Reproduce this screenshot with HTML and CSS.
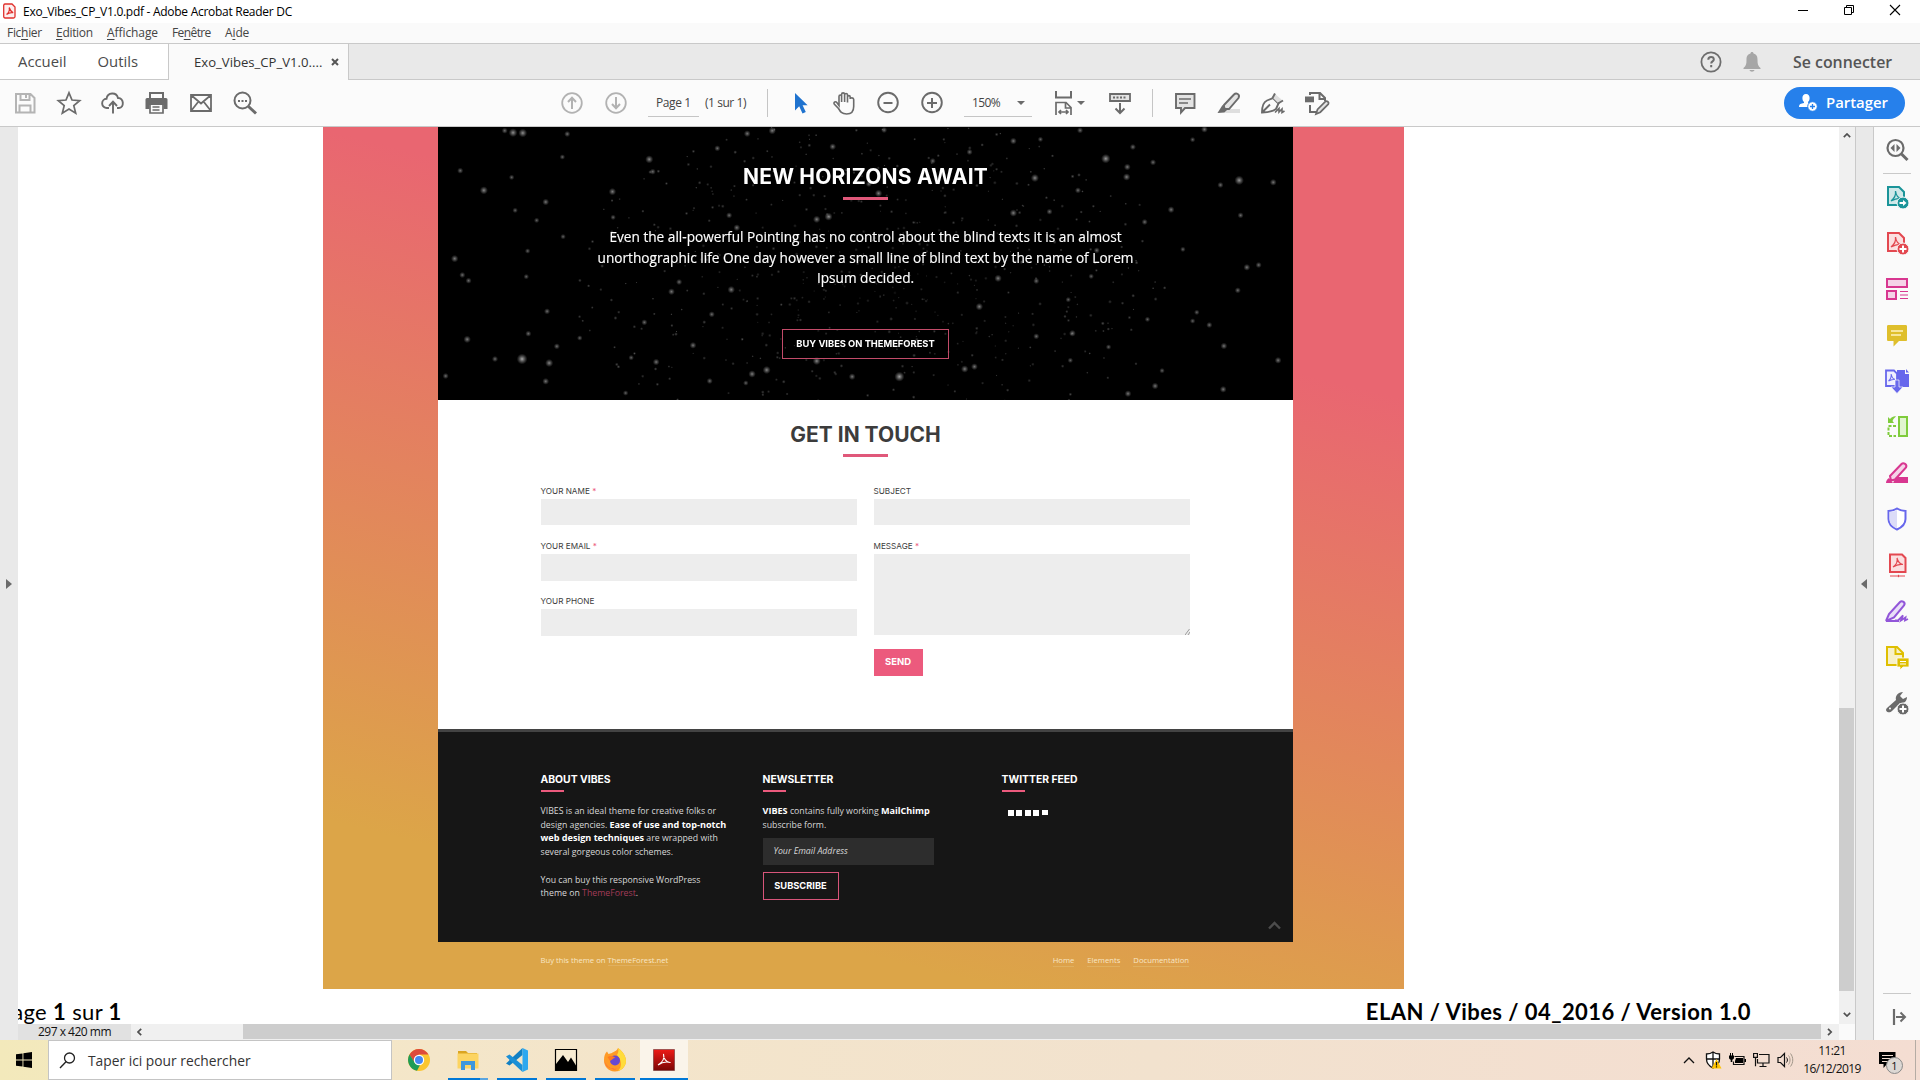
FILE: index.html
```html
<!DOCTYPE html>
<html lang="fr">
<head>
<meta charset="utf-8">
<title>Exo_Vibes_CP_V1.0.pdf - Adobe Acrobat Reader DC</title>
<link rel="stylesheet" href="styles.css">
</head>
<body>
<header class="titlebar">
  <svg class="app-icon" width="13" height="16" viewBox="0 0 13 16"><path d="M2 1h7l3 3v9.500a1.500 1.500 0 0 1-1.500 1.500H2A1.500 1.500 0 0 1 .7 13.500V2.300A1.500 1.500 0 0 1 2 1z" fill="#fdeeee" stroke="#e0302c" stroke-width="1.300"/><path d="M3.500 11.500C6 9.500 6.800 7 6.200 4.500c1 3 2 4.500 4 5.200-2.200-.4-4.700.2-6.700 1.800z" fill="none" stroke="#e0302c" stroke-width="1.200"/></svg>
  <span class="app-title">Exo_Vibes_CP_V1.0.pdf - Adobe Acrobat Reader DC</span>
  <div class="window-buttons">
    <svg width="12" height="12" viewBox="0 0 12 12"><path d="M1 6.500h10" stroke="#000"/></svg>
    <svg width="12" height="12" viewBox="0 0 12 12"><path d="M1.500 3.500h7v7h-7zM3.500 3.500v-2h7v7h-2" fill="none" stroke="#000"/></svg>
    <svg width="12" height="12" viewBox="0 0 12 12"><path d="M1 1l10 10M11 1L1 11" stroke="#000" stroke-width="1.100"/></svg>
  </div>
</header>
<nav class="menubar">
  <span class="m-file">Fic<u>h</u>ier</span><span class="m-edit"><u>E</u>dition</span><span class="m-view"><u>A</u>ffichage</span><span class="m-window">Fe<u>n</u>être</span><span class="m-help">A<u>i</u>de</span>
</nav>
<div class="tabbar">
  <div class="home-tabs"><span>Accueil</span><span>Outils</span></div>
  <div class="doc-tab"><span>Exo_Vibes_CP_V1.0....</span><svg width="8" height="8" viewBox="0 0 8 8"><path d="M1 1l6 6M7 1L1 7" stroke="#555" stroke-width="2"/></svg></div>
  <div class="account">
    <svg width="22" height="22" viewBox="0 0 22 22"><circle cx="11" cy="11" r="9.600" fill="none" stroke="#6e6e6e" stroke-width="1.800"/><path d="M8.300 8.700c0-3.700 5.500-3.400 5.500-.3 0 2-2.600 2-2.600 4M11.200 14v2.200" fill="none" stroke="#6e6e6e" stroke-width="2"/></svg>
    <svg width="18" height="20" viewBox="0 0 18 20"><path d="M9 0c1 0 1.500.6 1.500 1.600C14 2.500 14.500 5 14.500 8c0 4 .5 6 3 8v1H.500v-1c2.500-2 3-4 3-8 0-3 .5-5.500 4-6.400C7.500.6 8 0 9 0zM6.500 18h5c-.5 2.300-4.500 2.300-5 0z" fill="#a6a6a6"/></svg>
    <span>Se connecter</span>
  </div>
</div>
<div class="toolbar">
  <div class="group g-file">
    <svg class="ico" viewBox="0 0 24 24"><path d="M3 3h14.500l4 4v14.500H3zM7.500 3v6h9V3M6.500 21v-6.500h11V21M13 4v3" fill="none" stroke="#b4b4b4" stroke-width="2"/></svg>
    <svg class="ico" viewBox="0 0 24 24"><path d="M12 1.800l3 7.200 7.700.6-5.900 5 1.900 7.600L12 18l-6.700 4.200 1.900-7.600-5.900-5L9 9z" fill="none" stroke="#6b6b6b" stroke-width="1.700"/></svg>
    <svg class="ico" viewBox="0 0 24 24"><path d="M8 17H6a4.600 4.600 0 0 1-.5-9.200C6.500 1 15.500.800 17 7c6-.5 6.500 9.500 1 10h-2M12 22.500V11M8 15l4-4.300 4 4.300" fill="none" stroke="#6b6b6b" stroke-width="1.900"/></svg>
    <svg class="ico" viewBox="0 0 24 24"><path d="M5 8V2h13v6" fill="none" stroke="#6b6b6b" stroke-width="2"/><path d="M.500 8.500c0-1 1-1.500 2-1.500h18c1 0 2 .5 2 1.500V18h-4v-4h-14v4h-4z" fill="#6b6b6b"/><path d="M5 13v9h13v-9M7.500 16h7M7.500 19h7" fill="none" stroke="#6b6b6b" stroke-width="1.700"/></svg>
    <svg class="ico" viewBox="0 0 24 24"><path d="M2 4h20v16H2zM2 4l10 8.500L22 4M2 20l7.500-9.500M22 20l-7.500-9.500" fill="none" stroke="#6b6b6b" stroke-width="1.800"/></svg>
    <svg class="ico" viewBox="0 0 24 24"><circle cx="9.500" cy="9.500" r="8" fill="none" stroke="#6b6b6b" stroke-width="2"/><path d="M15.500 15.500l7.500 7" stroke="#6b6b6b" stroke-width="3"/><path d="M5 9h2v2H5zM8.500 9h2v2h-2zM12 9h2v2h-2z" fill="#6b6b6b"/></svg>
  </div>
  <div class="group g-page">
    <svg class="ico" viewBox="0 0 24 24"><circle cx="12" cy="12" r="9.800" fill="none" stroke="#b2b2b2" stroke-width="1.800"/><path d="M12 18V7M8 11l4-4.300 4 4.300" fill="none" stroke="#b2b2b2" stroke-width="2"/></svg>
    <svg class="ico" viewBox="0 0 24 24"><circle cx="12" cy="12" r="9.800" fill="none" stroke="#b2b2b2" stroke-width="1.800"/><path d="M12 6v11M8 13l4 4.300 4-4.300" fill="none" stroke="#b2b2b2" stroke-width="2"/></svg>
  </div>
  <span class="page-field">Page 1</span><span class="page-count">(1 sur 1)</span>
  <i class="divider d1"></i>
  <div class="group g-tools">
    <svg class="ico" viewBox="0 0 24 24"><path d="M7 2v17.500l4.200-4.200 3.300 7.200 3.300-1.500-3.200-6.800h5z" fill="#1f73cf"/></svg>
    <svg class="ico" viewBox="0 0 24 24"><path d="M7 14.500V5.500c0-2 2.600-2 2.600 0V11 3.500c0-2.200 3-2.200 3 0V11 4c0-2 2.900-2 2.900 0v7.500V6c0-1.800 2.700-1.800 2.700 0v2c0-1.600 3.500-1.600 3.500.5v7c0 5-3 7.500-7 7.500-5 0-6.500-2.500-8.200-5.500L2.200 13c-1-2 1.500-3 2.600-1.500z" fill="none" stroke="#6b6b6b" stroke-width="1.600"/></svg>
    <svg class="ico" viewBox="0 0 24 24"><circle cx="12" cy="11.500" r="9.800" fill="none" stroke="#6b6b6b" stroke-width="1.900"/><path d="M7.500 12h9" stroke="#6b6b6b" stroke-width="2"/></svg>
    <svg class="ico" viewBox="0 0 24 24"><circle cx="12" cy="11.500" r="9.800" fill="none" stroke="#6b6b6b" stroke-width="1.900"/><path d="M7 12h10M12 7v10" stroke="#6b6b6b" stroke-width="2"/></svg>
  </div>
  <span class="zoom-field">150%<i class="drop"></i></span>
  <div class="fit">
    <svg class="ico" viewBox="0 0 24 24"><path d="M4 0v6.500h15V0" fill="none" stroke="#6b6b6b" stroke-width="2"/><path d="M4 24V11.500h10l5 5V24M13.500 11.500V17H19M7 21h9M9 19l-2 2 2 2M14 19l2 2-2 2" fill="none" stroke="#6b6b6b" stroke-width="1.700"/></svg><i class="drop"></i>
  </div>
  <svg class="ico keyboard" viewBox="0 0 24 24"><path d="M2 3h20v7H2z" fill="#e3e3e3" stroke="#6b6b6b" stroke-width="1.800"/><path d="M5 6.500h14" stroke="#6b6b6b" stroke-width="2" stroke-dasharray="2 1.500"/><path d="M12 12v10M7.500 17.500l4.500 4.500 4.500-4.500" fill="none" stroke="#6b6b6b" stroke-width="2"/></svg>
  <i class="divider"></i>
  <div class="group g-comment">
    <svg class="ico" viewBox="0 0 24 24"><path d="M3 3h18.500v14H12l-4 4.500V17H3z" fill="#e3e3e3" stroke="#6b6b6b" stroke-width="1.900"/><path d="M6 8h12M6 12h9" stroke="#6b6b6b" stroke-width="1.600"/></svg>
    <svg class="ico" viewBox="0 0 24 24"><path d="M10 18h13v4H8z" fill="#dedede"/><path d="M7 14L17 3.500c2-2 6.500-.5 4.500 3.500L12 18H7z" fill="#e3e3e3" stroke="#6b6b6b" stroke-width="1.900"/><path d="M5.500 14l5 4.500-3 3L.500 22z" fill="#6b6b6b"/></svg>
    <svg class="ico" viewBox="0 0 24 24"><path d="M1 21.500c0-7 1.500-10.500 5-12l6-2.500 5.500 5.500-2.500 5.500c-3 2-7 3.500-14 3.500zM1 21.500l8-8" fill="none" stroke="#6b6b6b" stroke-width="1.900"/><path d="M13 2l8 7-4 3-5.500-5.500z" fill="#dedede"/><path d="M11.500 7L14 2.500M17 12.500l5-3" fill="none" stroke="#6b6b6b" stroke-width="1.900"/><path d="M14 21.500l4-4v3.500l3-3v3.500l2.500-1.500" fill="none" stroke="#6b6b6b" stroke-width="1.600"/></svg>
    <svg class="ico" viewBox="0 0 24 24"><path d="M5 4V2h10l5 5v3M14.500 2v6H20M5 14v7h7" fill="none" stroke="#6b6b6b" stroke-width="2"/><path d="M0 5.500h9v5.800H0z" fill="#6b6b6b"/><path d="M11 23l1.500-4.500 8-8c1.500-1 4 .8 2.800 2.700l-8 8z" fill="#e3e3e3" stroke="#6b6b6b" stroke-width="1.700"/></svg>
  </div>
  <div class="share">
    <svg width="19" height="18" viewBox="0 0 19 18"><path d="M7 0c2.500 0 3.600 1.700 3.600 4C10.600 6 10 7 9 8c0 1.500 1 1.800 3 2.500L9 13H0c0-3 2-3.500 5-4V8C4 7 3.400 6 3.400 4 3.400 1.700 4.500 0 7 0z" fill="#fff"/><circle cx="13.500" cy="12.500" r="4.800" fill="#fff" stroke="#2680eb"/><path d="M11 12.500h5M13.500 10v5" stroke="#2680eb" stroke-width="1.300"/></svg>
    <span>Partager</span>
  </div>
</div>
<main class="work">
  <div class="left-strip"><i class="tri-right"></i></div>
  <div class="viewer">
    <div class="viewport">
      <div class="pages">
        <article class="art">
          <section class="hero">
            <canvas class="stars" width="854" height="273"></canvas>
            <div class="hero-text">
              <h1>NEW HORIZONS AWAIT</h1>
              <i class="rule"></i>
              <p>Even the all-powerful Pointing has no control about the blind texts it is an almost<br>unorthographic life One day however a small line of blind text by the name of Lorem<br>Ipsum decided.</p>
              <span class="buy">BUY VIBES ON THEMEFOREST</span>
            </div>
          </section>
          <section class="contact">
            <h2>GET IN TOUCH</h2>
            <i class="rule"></i>
            <div class="form">
              <div class="col">
                <label>YOUR NAME <b>*</b></label><div class="field"></div>
                <label>YOUR EMAIL <b>*</b></label><div class="field"></div>
                <label>YOUR PHONE</label><div class="field"></div>
              </div>
              <div class="col">
                <label>SUBJECT</label><div class="field"></div>
                <label>MESSAGE <b>*</b></label>
                <div class="field area"><svg width="5" height="6" viewBox="0 0 5 6"><path d="M0 6l4.500-6M3 6l2-3" stroke="#777" stroke-width=".7"/></svg></div>
                <span class="send">SEND</span>
              </div>
            </div>
          </section>
          <section class="info">
            <div class="about">
              <h3>ABOUT VIBES</h3><i class="mini"></i>
              <p>VIBES is an ideal theme for creative folks or<br>design agencies. <b>Ease of use and top-notch</b><br><b>web design techniques</b> are wrapped with<br>several gorgeous color schemes.<br><br>You can buy this responsive WordPress<br>theme on <em>ThemeForest</em>.</p>
            </div>
            <div class="news">
              <h3>NEWSLETTER</h3><i class="mini"></i>
              <p><b>VIBES</b> contains fully working <b>MailChimp</b><br>subscribe form.</p>
              <div class="email">Your Email Address</div>
              <span class="subscribe">SUBSCRIBE</span>
            </div>
            <div class="feed">
              <h3>TWITTER FEED</h3><i class="mini"></i>
              <div class="dots"><i></i><i></i><i></i><i></i><i></i></div>
            </div>
            <svg class="top" width="13" height="9" viewBox="0 0 13 9"><path d="M1 7.500L6.500 2 12 7.500" fill="none" stroke="#4c4c4c" stroke-width="2.400"/></svg>
          </section>
          <footer class="credits"><span>Buy this theme on <u>ThemeForest.net</u></span><span class="links"><u>Home</u><u>Elements</u><u>Documentation</u></span></footer>
        </article>
        <div class="pagefoot"><span class="pageno">Page <b>1</b> sur <b>1</b></span><b class="docref">ELAN / Vibes / 04_2016 / Version 1.0</b></div>
      </div>
      <div class="vscroll">
        <svg width="8" height="5" viewBox="0 0 8 5"><path d="M.800 4.200L4 1l3.200 3.200" fill="none" stroke="#505050" stroke-width="1.700"/></svg>
        <i class="vthumb"></i>
        <svg width="8" height="5" viewBox="0 0 8 5"><path d="M.800.800L4 4 7.200.800" fill="none" stroke="#505050" stroke-width="1.700"/></svg>
      </div>
    </div>
    <div class="hscroll">
      <span class="size">297 x 420 mm</span>
      <svg class="hleft" width="5" height="8" viewBox="0 0 5 8"><path d="M4.200.800L1 4l3.200 3.200" fill="none" stroke="#505050" stroke-width="1.700"/></svg>
      <i class="hthumb"></i>
      <svg width="6" height="8" viewBox="0 0 6 8"><path d="M1 .800L4.200 4 1 7.200" fill="none" stroke="#505050" stroke-width="1.700"/></svg>
      <i class="corner"></i>
    </div>
  </div>
  <div class="right-strip"><i class="tri-left"></i></div>
  <aside class="tools">
    <div><svg class="ico" viewBox="0 0 24 24"><circle cx="10.500" cy="10" r="8" fill="none" stroke="#6b6b6b" stroke-width="2.200"/><path d="M16.500 16l6 6" stroke="#6b6b6b" stroke-width="3"/><path d="M9.500 6v8l-4-4zM11.500 6v8l4-4z" fill="#6b6b6b"/></svg></div>
    <i class="line"></i>
    <div><svg class="ico" viewBox="0 0 24 24"><path d="M3 2h11l5 5v13H3z" fill="#cfe8e8" stroke="#1a9499" stroke-width="2"/><path d="M6 16c4-3 5-6 4.500-10 .5 4 2.500 7 6 7.500-4-.5-7 .5-10.500 2.500z" fill="none" stroke="#1a9499" stroke-width="1.300"/><circle cx="18" cy="18" r="6" fill="#1a9499" stroke="#fafafa"/><path d="M14.500 18h4" stroke="#fff" stroke-width="2"/><path d="M18 15l3.500 3-3.500 3z" fill="#fff"/></svg></div>
    <div><svg class="ico" viewBox="0 0 24 24"><path d="M3 2h11l5 5v13H3z" fill="#fbdfe0" stroke="#e34850" stroke-width="2"/><path d="M6 16c4-3 5-6 4.500-10 .5 4 2.500 7 6 7.500-4-.5-7 .5-10.500 2.500z" fill="none" stroke="#e34850" stroke-width="1.300"/><circle cx="18" cy="18" r="6" fill="#e34850" stroke="#fafafa"/><path d="M14.500 18h7M18 14.500v7" stroke="#fff" stroke-width="2"/></svg></div>
    <div><svg class="ico" viewBox="0 0 24 24"><path d="M2 2h20v8H2zM2 14h9v8H2z" fill="#f5d3e8" stroke="#d83790" stroke-width="2"/><path d="M15 14.500h8M15 18h8M15 21.500h8" stroke="#d83790" stroke-width="1.200"/></svg></div>
    <div><svg class="ico" viewBox="0 0 24 24"><path d="M3.500 2h17c1 0 1.500.5 1.500 1.500V17c0 .7-.5 1-1 1h-7l-5.500 5.500V18h-5c-1 0-1.500-.5-1.500-1V3.500C2 2.500 2.500 2 3.500 2z" fill="#dfbf2c"/><path d="M6 8h12M6 12h10" stroke="#fff3c0" stroke-width="1.500"/></svg></div>
    <div><svg class="ico" viewBox="0 0 24 24"><path d="M12 1h8v4h4v13H12z" fill="#6767ec"/><path d="M21 0l3 3.500h-3z" fill="#6767ec"/><path d="M1 1.500h8l3 3V17H1z" fill="#f0f0ff" stroke="#6767ec" stroke-width="1.800"/><path d="M3.500 12c2.500-2 3-4 2.700-7 .5 3 1.500 5 3.800 5.300-2.500 0-4.500.7-6.500 1.700z" fill="none" stroke="#6767ec" stroke-width="1.100"/><path d="M10 11h4v7h4l-6 6.500L6 18h4z" fill="#6767ec" stroke="#fafafa" stroke-width=".7"/></svg></div>
    <div><svg class="ico" viewBox="0 0 24 24"><path d="M14 2h8v19h-8z" fill="#e1f5d0" stroke="#7fcc3c" stroke-width="2"/><path d="M11 11H3.500v10H11" fill="none" stroke="#7fcc3c" stroke-width="2" stroke-dasharray="3 1.500"/><path d="M3 8V2l2 2c2-2 4-3 6-2.500C9 3 8 4.500 7.500 6L9 8z" fill="#7fcc3c"/></svg></div>
    <div><svg class="ico" viewBox="0 0 24 24"><path d="M11 16h12v6H8z" fill="#d83790"/><path d="M5 15L16.500 3c2-2 6 .5 4.500 3.500L10 18.500l-4 1z" fill="#f5d3e8" stroke="#d83790" stroke-width="2"/><path d="M4 17l4 5H1c0-2 1-4 3-5z" fill="#d83790"/></svg></div>
    <div><svg class="ico" viewBox="0 0 24 24"><path d="M12 1.500c3 2 5 2.500 8.500 2.500v8c0 5-4 8.500-8.500 10.500-4.500-2-8.500-5.500-8.500-10.500V4C7 4 9 3.500 12 1.500z" fill="#fff" stroke="#6767ec" stroke-width="2"/><path d="M12 3v18.500c-4-2-7.500-4.500-7.500-9.500V5C8 5 9.500 4.500 12 3z" fill="#dcdcf8"/></svg></div>
    <div><svg class="ico" viewBox="0 0 24 24"><path d="M5 1.500h12l3.500 3.500v14H5z" fill="#fbdfe0" stroke="#e34850" stroke-width="2"/><path d="M8 14c4-3 5-5.500 4-9 1 4 2.500 6 6 6.500-4-.5-7 .5-10 2.500z" fill="none" stroke="#e34850" stroke-width="1.200"/><path d="M5 23h7M15 23h5" stroke="#e34850" stroke-width="1.200"/><circle cx="13.500" cy="23" r="1.200" fill="#e34850"/></svg></div>
    <div><svg class="ico" viewBox="0 0 24 24"><path d="M1 22l3-7L15 3c2-2 6 .5 4 3.500L9 18.500 1 22h13" fill="#e9dff8" stroke="#9256d9" stroke-width="2"/><path d="M10 21.500h3l5-5-2 5 4.500-3-.5 3 3-1.500" fill="none" stroke="#9256d9" stroke-width="1.800"/></svg></div>
    <div><svg class="ico" viewBox="0 0 24 24"><path d="M2 2h10l6 6v12H2z" fill="#f7f0c8" stroke="#dfbf00" stroke-width="2"/><path d="M10.500 2v7H18" fill="none" stroke="#dfbf00" stroke-width="2"/><path d="M12 13h12v9h-6l-3 3v-3h-3z" fill="#dfbf00" stroke="#fafafa" stroke-width=".8"/><path d="M15 16.500h6M15 19h6" stroke="#fff"/></svg></div>
    <div><svg class="ico" viewBox="0 0 24 24"><path d="M2 17l9-8c-1-4 2-8 7-8l-3 4 3 3 4-2c0 4-3 7-7 6l-8 8c-3 3-8 0-5-3z" fill="#6b6b6b"/><circle cx="5" cy="17.500" r="1" fill="#fff"/><circle cx="18" cy="18" r="6" fill="#6b6b6b" stroke="#fafafa"/><path d="M14.500 18h7M18 14.500v7" stroke="#fff" stroke-width="2"/></svg></div>
    <i class="line last"></i>
    <div><svg class="ico" viewBox="0 0 24 24"><path d="M9 4v16" stroke="#6b6b6b" stroke-width="2.200"/><path d="M11 12h8M15.500 7.500L20 12l-4.500 4.500" fill="none" stroke="#6b6b6b" stroke-width="2"/></svg></div>
  </aside>
</main>
<footer class="taskbar">
  <div class="start"><svg width="16" height="16" viewBox="0 0 16 16"><path d="M0 2.300L6.500 1.400V7.500H0zM7.400 1.300L16 0v7.500H7.400zM0 8.400h6.500v6.200L0 13.700zM7.400 8.400H16V16l-8.600-1.200z"/></svg></div>
  <div class="search"><svg width="17" height="17" viewBox="0 0 17 17"><circle cx="10.500" cy="6" r="5" fill="none" stroke="#222" stroke-width="1.300"/><path d="M7 9.800L1 16" stroke="#222" stroke-width="1.400"/></svg><span>Taper ici pour rechercher</span></div>
  <div class="apps">
    <div class="app"><svg width="24" height="24" viewBox="0 0 24 24"><circle cx="12" cy="12" r="11" fill="#fbc62f"/><path d="M2.500 6.500A11 11 0 0 1 21.500 6.500H12L7 14z" fill="#de4b3b"/><path d="M2.500 6.500L8 15l5 2-3 5.800A11 11 0 0 1 2.500 6.500z" fill="#1f9c57"/><circle cx="12" cy="12" r="5.200" fill="#fff"/><circle cx="12" cy="12" r="4" fill="#4688f1"/></svg></div>
    <div class="app run more"><svg width="24" height="24" viewBox="0 0 24 24"><path d="M2 3h8l2 2h9v4H2z" fill="#dba520"/><path d="M1.500 5.500h21v15h-21z" fill="#fcd462"/><path d="M5 13h14v9h-4v-5H9v5H5z" fill="#3d97dd"/></svg></div>
    <div class="app run"><svg width="24" height="24" viewBox="0 0 24 24"><path d="M17.500 0v7L4.500 17.500 1 15.500z" fill="#1180c4"/><path d="M17.500 24v-7L4.500 6.500 1 8.500z" fill="#1b8fd6"/><path d="M17.500 0L23 2.500v19L17.500 24z" fill="#2ea8ef"/></svg></div>
    <div class="app run"><svg width="24" height="24" viewBox="0 0 24 24"><path d="M1.500 1.500h21v21h-21z" fill="#f8ecd2" stroke="#000" stroke-width="1.200"/><path d="M2 22v-6l7-9 5 7 3-4.500 5 8V22z"/></svg></div>
    <div class="app run"><svg width="24" height="24" viewBox="0 0 24 24"><path d="M1 12C1 8 2 5.500 4 3.500L5.500 6 9 5c1-1 5-2 6-5 3 2 8 7 8 13a11 11 0 0 1-22-1z" fill="#ff9a26"/><path d="M15 0c3 2 8 7 8 13 0 5-4 9-8 10 5-5 3-12-1-16 1-2 2-4 1-7z" fill="#ffdc3a"/><path d="M1.200 12.500C4 22 14 23 19.500 18a10.800 10.800 0 0 1-18.300-5.500z" fill="#f5315c"/><circle cx="12" cy="12.500" r="5" fill="#6848d2"/><path d="M4.500 9c3-2 6-1 8 1-3 0-3 2-5.500 3z" fill="#ff7a20"/></svg></div>
    <div class="app run active"><svg width="24" height="24" viewBox="0 0 24 24"><defs><linearGradient id="ar" x1="0" y1="0" x2="0" y2="1"><stop offset="0" stop-color="#ee1a16"/><stop offset="1" stop-color="#7a0504"/></linearGradient></defs><path d="M1.500 1.500h21v21h-21z" fill="url(#ar)" stroke="#6b3030" stroke-width=".6"/><path d="M6 17c5-3 7-6 5.500-11-.5 4 3 9 7 8.500-4-1-9 0-12.500 2.500z" fill="none" stroke="#fff" stroke-width="1.100"/></svg></div>
  </div>
  <div class="tray">
    <svg class="t-caret" width="12" height="8" viewBox="0 0 12 8"><path d="M1 7l5-5 5 5" fill="none" stroke="#111" stroke-width="1.300"/></svg>
    <svg width="17" height="18" viewBox="0 0 17 18"><path d="M8 1c2 1.500 4 2 6.500 2v5c0 4-2.500 7-6.500 9-4-2-6.500-5-6.500-9V3C4 3 6 2.500 8 1zM8 1v15M1.500 8h13" fill="#fff" stroke="#111" stroke-width="1.300"/><path d="M11.500 8l5 9.500h-10z" fill="#ffc400"/><path d="M11.500 11v3.500M11.500 15.300v1.200" stroke="#111" stroke-width="1.200"/></svg>
    <svg width="17" height="14" viewBox="0 0 17 14"><path d="M5.500 3.500H15v8H4.500v-3" fill="none" stroke="#111" stroke-width="1.200"/><path d="M7 5h7v5H6V8zM15.500 6H17v3h-1.500zM0 2.500h5v2C5 6 4 6.500 3.300 6.700V9H1.700V6.700C1 6.500 0 6 0 4.500zM1 0h1v3H1zM3 0h1v3H3z"/></svg>
    <svg width="17" height="16" viewBox="0 0 17 16"><path d="M6 2.500h10v8.500H4.500V7M10 11v3M6.500 14.500h7M.6 1.500h3.800v3.800H.6zM2.500 5.300v9" fill="none" stroke="#111" stroke-width="1.200"/></svg>
    <svg width="17" height="16" viewBox="0 0 17 16"><path d="M1 5.500h2.500l4-4v13l-4-4H1z" fill="none" stroke="#111" stroke-width="1.200"/><path d="M9.500 5.500c1.200 1.500 1.200 3.500 0 5" fill="none" stroke="#111"/><path d="M11.500 3.500c2 2.500 2 6.500 0 9M13.500 1.500c3 4 3 9 0 13" fill="none" stroke="#a09689"/></svg>
    <div class="clock"><span>11:21</span><span>16/12/2019</span></div>
    <div class="notif"><svg width="17" height="16" viewBox="0 0 17 16"><path d="M0 0h16.500v12H8l-3.500 4v-4H0z"/><path d="M3 3.500h11M3 6.500h11M3 9.500h7" stroke="#f3ded2" stroke-width="1.100"/></svg><span class="badge">1</span></div>
    <i class="peek"></i>
  </div>
</footer>
<script src="stars.js"></script>
</body>
</html>
```
FILE: styles.css
```css
* { box-sizing: border-box; }
body { margin: 0; width: 1920px; height: 1080px; overflow: hidden; display: flex; flex-direction: column; background: #fff; color: #111; font: 12px/16px "Open Sans", "Noto Sans", sans-serif; }
svg { display: block; flex: none; }
i { font-style: normal; display: block; flex: none; }
h1, h2, h3, p { margin: 0; }

.titlebar { height: 23px; display: flex; align-items: center; padding: 0 19px 0 3px; flex: none; }
.app-icon { margin-bottom: 2px; }
.app-title { margin-left: 7px; letter-spacing: -.28px; color: #000; }
.window-buttons { margin-left: auto; display: flex; gap: 34px; margin-bottom: 3px; }

.menubar { height: 21px; flex: none; background: #fafafa; border-bottom: 1px solid #c9c9c9; display: flex; align-items: center; padding-left: 7px; color: #444; }
.menubar u { text-underline-offset: 2px; }
.m-file { width: 49px; letter-spacing: -.3px; }
.m-edit { width: 51px; letter-spacing: -.3px; }
.m-view { width: 65px; letter-spacing: -.08px; }
.m-window { width: 53px; letter-spacing: -.6px; }
.m-help { letter-spacing: -.12px; }

.tabbar { height: 36px; flex: none; display: flex; background: #e9e9e9; }
.home-tabs { width: 169px; background: #fff; border-right: 1px solid #c9c9c9; border-bottom: 1px solid #c9c9c9; padding: 0 0 1px 18px; display: flex; align-items: center; gap: 31px; font-size: 14.850px; color: #4b4b4b; }
.doc-tab { width: 180px; background: #fafafa; border-right: 1px solid #c9c9c9; padding: 0 9px 0 25px; display: flex; align-items: center; justify-content: space-between; font-size: 13.140px; color: #333; }
.account { flex: 1; border-bottom: 1px solid #c9c9c9; display: flex; align-items: center; justify-content: flex-end; padding-right: 26px; font-size: 15.900px; font-weight: 600; color: #555; }
.account svg:nth-child(2) { margin: 0 32px 0 21px; }
.account span { width: 101px; white-space: nowrap; }

.toolbar { height: 47px; flex: none; background: #fbfbfb; border-bottom: 1px solid #c9c9c9; display: flex; align-items: center; color: #444; }
.ico { width: 24px; height: 24px; overflow: visible; }
.group { display: flex; }
.group .ico { margin: 0 10px; }
.g-file { margin-left: 3px; }
.g-page { margin-left: 283px; }
.page-field { width: 51px; height: 28px; margin-left: 10px; padding: 6px 8px; border-bottom: 1px solid #c5c5c5; white-space: nowrap; letter-spacing: -.4px; }
.page-count { margin-left: 6px; width: 62px; letter-spacing: -.45px; white-space: nowrap; }
.divider { width: 1px; height: 28px; background: #c5c5c5; }
.g-tools { margin-left: 10px; }
.zoom-field { width: 68px; height: 28px; margin-left: 10px; padding: 0 7px 0 8px; border-bottom: 1px solid #c5c5c5; display: flex; align-items: center; justify-content: space-between; letter-spacing: -.63px; }
.drop { border: 4px solid transparent; border-top-color: #6b6b6b; border-bottom: 0; }
.fit { display: flex; align-items: center; margin-left: 20px; }
.fit .drop { margin-left: 1px; }
.keyboard { margin: 0 20px 0 23px; }
.g-comment { margin-left: 10px; }
.share { margin: 0 15px 0 auto; width: 121px; height: 32px; border-radius: 16px; background: #2680eb; color: #fff; display: flex; align-items: center; padding-left: 15px; gap: 8px; font-size: 14.900px; line-height: 30px; font-weight: 600; }
.share span { height: 32px; }

.work { height: 913px; flex: none; display: flex; }
.left-strip { width: 18px; background: #e9e9e9; display: flex; align-items: center; padding-left: 6px; }
.tri-right { border: 5px solid transparent; border-left: 6px solid #6b6b6b; border-right: 0; }
.viewer { width: 1837px; display: flex; flex-direction: column; }
.viewport { height: 897px; display: flex; }
.pages { width: 1821px; overflow: hidden; background: #fff; }

.art { width: 1081px; height: 862px; margin-left: 305px; padding: 0 111px 0 115px; background: linear-gradient(194deg, #e96671 24%, #dca548 85%); font-family: "Open Sans", sans-serif; }
.hero { height: 273px; background: #000; color: #fff; display: grid; }
.stars, .hero-text { grid-area: 1 / 1; }
.hero-text { display: flex; flex-direction: column; align-items: center; padding-top: 36px; z-index: 1; }
h1, h2 { font: 700 21px/28px Inter, sans-serif; letter-spacing: .21px; }
.rule { width: 45px; height: 2.500px; background: #e0587a; margin-top: 6px; }
.hero-text p { margin-top: 27.500px; font-size: 13.660px; line-height: 20.500px; text-align: center; white-space: nowrap; color: #fff; -webkit-text-stroke: .15px #fff; }
.buy { margin-top: 40px; height: 30px; width: 167px; border: 1.500px solid #c24b69; text-align: center; white-space: nowrap; font: 700 9.330px/27px Inter, sans-serif; }
.contact { height: 329px; background: #fff; display: flex; flex-direction: column; align-items: center; padding-top: 21px; }
.contact h2 { color: #3c3c3c; letter-spacing: 0; }
.contact .rule { margin-top: 5px; }
.form { display: flex; gap: 17px; margin: 28px 1px 0 0; font: 8.200px/12px Inter, sans-serif; color: #3c3c3c; }
.col { width: 316px; }
label { display: block; height: 14.300px; }
label b { color: #ec5a7d; font-weight: 400; }
.field { height: 26.500px; background: #ededed; margin-bottom: 14.500px; }
.area { height: 81px; display: flex; align-items: flex-end; justify-content: flex-end; margin-bottom: 14px; }
.send { display: block; width: 49px; height: 26.500px; background: #ec5a7d; color: #fff; text-align: center; font-weight: 700; font-size: 9.460px; line-height: 26.500px; }
.info { height: 213px; background: #161616; border-top: 3px solid #434343; color: #d8d8d8; padding: 40px 0 0 102.500px; display: flex; position: relative; font-size: 8.750px; line-height: 13.700px; }
.info h3 { font: 700 10.360px/14px Inter, sans-serif; color: #fff; }
.info b { color: #fff; font-size: 9.100px; line-height: 1; }
.mini { width: 23px; height: 2px; background: #ec5a7d; margin: 4px 0 13px; }
.about { width: 222px; white-space: nowrap; }
.about em { font-style: normal; color: #a23b58; }
.news { width: 239px; white-space: nowrap; }
.email { margin-top: 6px; width: 171px; height: 27px; background: #2d2d2d; padding-left: 11px; font-style: italic; line-height: 27px; }
.subscribe { display: block; margin-top: 6.500px; width: 76px; height: 28px; border: 1.500px solid #d8557a; text-align: center; color: #fff; font: 700 9.290px/25px Inter, sans-serif; }
.dots { display: flex; gap: 2.500px; padding: 5px 0 0 6px; }
.dots i { width: 6px; height: 6px; background: #fff; }
.dots i:last-child { height: 5px; }
.top { position: absolute; right: 12px; bottom: 12px; }
.credits { display: flex; justify-content: space-between; padding: 10.500px 103px 0 102.500px; font-size: 7.680px; line-height: 14px; color: #f8e6c6; }
.credits u { text-decoration: none; border-bottom: 1px solid #e0b060; height: 14px; }
.links { display: flex; gap: 13px; margin-right: 1px; }
.pagefoot { display: flex; justify-content: space-between; padding: 7px 88px 0 0; font: 22px/32px Lato, sans-serif; color: #000; white-space: nowrap; }
.pageno { margin-left: -19px; letter-spacing: .35px; }
.docref { letter-spacing: .45px; }

.vscroll { width: 16px; background: #f0f0f0; display: flex; flex-direction: column; align-items: center; padding: 6px 0 7px; }
.vthumb { width: 15px; height: 283px; margin: 570px 1px 21px 0; background: #cdcdcd; }
.hscroll { height: 16px; display: flex; align-items: center; background: #f0f0f0; }
.size { width: 113px; height: 16px; padding-left: 20px; background: #e1e1e1; letter-spacing: -.5px; line-height: 15px; }
.hleft { margin: 0 101px 0 6px; }
.hthumb { width: 1578px; height: 15px; background: #cdcdcd; margin-right: 6px; align-self: flex-start; }
.corner { width: 16px; height: 16px; margin-left: auto; background: #fafafa; }
.right-strip { width: 19px; border: 1px solid #c9c9c9; border-width: 0 1px; background: #e9e9e9; display: flex; align-items: center; padding-left: 5px; }
.tri-left { border: 5px solid transparent; border-right: 6px solid #6b6b6b; border-left: 0; }
.tools { width: 46px; background: #fafafa; display: flex; flex-direction: column; }
.tools div { height: 46px; display: flex; align-items: center; justify-content: center; }
.line { height: 1px; width: 28px; background: #c9c9c9; margin-left: 9px; }
.last { margin-top: auto; }

.taskbar { height: 40px; flex: none; display: flex; background: linear-gradient(90deg, #f3e9bb, #f4e6c9 22%, #f2e2ce 60%, #f4ddd2); }
.start { width: 48px; display: flex; align-items: center; justify-content: center; }
.search { width: 344px; background: #fff; border: 1px solid #c4c4c4; display: flex; align-items: center; padding-left: 10px; gap: 12px; font-size: 13.800px; color: #333; }
.search span { margin-top: 1px; }
.apps { display: flex; gap: 1px; margin-left: 3px; }
.app { width: 48px; height: 40px; display: flex; align-items: center; justify-content: center; background: linear-gradient(#0078d7, #0078d7) center bottom / 0 2px no-repeat; }
.run { background-size: 40px 2px; }
.more { background: linear-gradient(90deg, #0078d7 32px, #5aa5e0 32px) center bottom / 40px 2px no-repeat; }
.active { background-color: #faf4ea; background-size: 48px 2px; }
.tray { margin-left: auto; display: flex; align-items: center; }
.tray > svg { margin-right: 7px; }
.tray .t-caret { margin-right: 10px; }
.clock { width: 64px; margin-left: -1px; display: flex; flex-direction: column; align-items: center; gap: 2px; letter-spacing: -.62px; }
.notif { position: relative; margin: 0 19px 0 15px; }
.badge { position: absolute; left: 7px; top: 5px; width: 17px; height: 17px; border-radius: 9px; border: 1px solid #888; background: #ddd8d4; text-align: center; font-size: 11px; line-height: 15px; }
.peek { width: 1px; height: 40px; background: #b5aca4; margin-right: 4px; }
```
FILE: stars.js
```js
// Star field: the bright stars are charted on a 1229 x 819 map, [x, y, brightness]
const canvas = document.querySelector('.stars');
const ctx = canvas.getContext('2d');
const bright = [
  [108, 17, 9], [122, 18, 9], [96, 11, 5], [186, 21, 5], [304, 97, 8], [309, 134, 5], [179, 90, 4], [32, 131, 5],
  [106, 151, 4], [66, 190, 8], [251, 194, 7], [155, 225, 6], [111, 250, 4], [142, 280, 4], [252, 271, 4], [180, 329, 4],
  [24, 395, 7], [35, 444, 5], [44, 461, 5], [129, 372, 4], [127, 449, 4], [157, 553, 5], [130, 620, 5], [42, 637, 7],
  [171, 658, 5], [204, 633, 4], [82, 696, 5], [121, 696, 12], [160, 708, 8], [11, 747, 5], [155, 763, 6], [278, 692, 4],
  [297, 586, 5], [314, 705, 6], [394, 562, 5], [422, 488, 7], [336, 494, 6], [347, 465, 5], [367, 655, 6], [473, 729, 8],
  [452, 741, 7], [391, 762, 5], [545, 702, 8], [596, 749, 6], [664, 749, 11], [758, 726, 7], [772, 719, 6], [779, 539, 7],
  [806, 454, 7], [861, 462, 5], [562, 269, 8], [545, 277, 7], [419, 265, 5], [430, 302, 6], [634, 199, 7], [620, 171, 5],
  [828, 258, 7], [859, 153, 8], [828, 42, 6], [961, 95, 10], [992, 120, 6], [991, 150, 7], [921, 190, 5], [1029, 106, 5],
  [1000, 60, 5], [1126, 174, 5], [1153, 160, 10], [1202, 166, 6], [1055, 248, 6], [1017, 285, 5], [1155, 265, 5],
  [1072, 367, 4], [1164, 421, 6], [1181, 414, 5], [1151, 490, 5], [1092, 556, 4], [1110, 594, 5], [1086, 582, 4],
  [1021, 577, 4], [1131, 657, 6], [1209, 700, 6], [1130, 787, 6], [1032, 777, 6], [993, 800, 6], [1042, 731, 4],
  [910, 700, 4], [913, 619, 6], [907, 518, 4], [861, 628, 5], [965, 660, 4], [1103, 7, 6], [1086, 38, 4], [481, 11, 7],
  [445, 20, 6], [402, 64, 5], [568, 59, 6], [642, 9, 5], [712, 102, 5], [765, 75, 5], [867, 37, 4], [924, 10, 5],
  [880, 254, 5], [948, 370, 5], [940, 448, 4], [270, 798, 4], [443, 768, 4]
];
let seed = 7;
const rand = () => (seed = (seed * 16807) % 2147483647) / 2147483647;
const star = (x, y, r, a) => {
  const g = ctx.createRadialGradient(x, y, 0, x, y, r);
  g.addColorStop(0, `rgba(215,215,215,${a})`);
  g.addColorStop(1, 'rgba(160,160,160,0)');
  ctx.fillStyle = g;
  ctx.fillRect(x - r, y - r, r * 2, r * 2);
};
const sx = 854 / 1229, sy = 273 / 819;
for (const [x, y, b] of bright) star(x * sx, y * sy, 1.5 + b * 0.32, 0.32 + b * 0.04);
// Faint dust, densest low in the middle
for (let i = 0; i < 650; i++) {
  const a = rand() * Math.PI * 2, d = Math.pow(rand(), 0.7);
  star(434 + Math.cos(a) * d * 300, 155 + Math.sin(a) * d * 175, 1 + rand() * 1, 0.1 + rand() * 0.14 + d * 0.16);
}
```
